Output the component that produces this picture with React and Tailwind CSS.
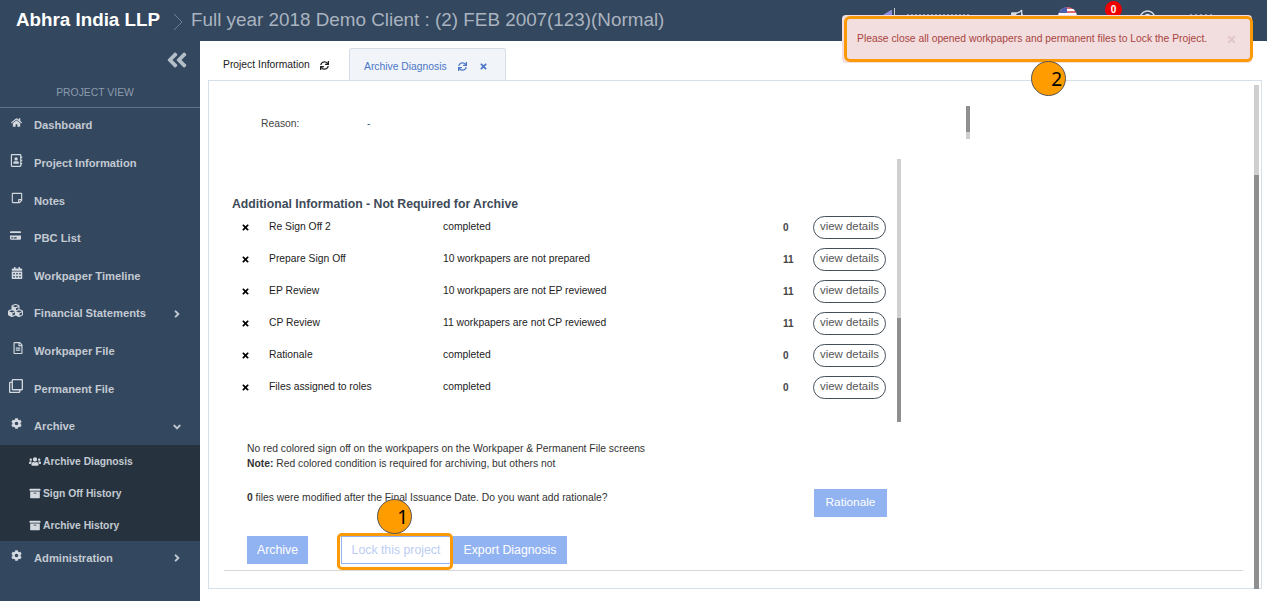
import React from 'react';
import {
  FaHome, FaRegAddressBook, FaRegStickyNote, FaCreditCard, FaCalendarAlt, FaCubes, FaRegFileAlt,
  FaRegClone, FaCog, FaAngleRight, FaAngleDown, FaAngleDoubleLeft, FaUsers, FaArchive, FaSync,
  FaTimes, FaBullhorn, FaRegQuestionCircle,
} from 'react-icons/fa';

const menuTop = [
  { label: 'Dashboard', icon: FaHome, iconClass: 'ml-[1px] text-[11px]' },
  { label: 'Project Information', icon: FaRegAddressBook, iconClass: 'text-[13px]' },
  { label: 'Notes', icon: FaRegStickyNote, iconClass: 'ml-[1px] text-[12px]' },
  { label: 'PBC List', icon: FaCreditCard, iconClass: 'text-[11px]' },
  { label: 'Workpaper Timeline', icon: FaCalendarAlt, iconClass: 'ml-[1px] text-[12px]' },
  { label: 'Financial Statements', icon: FaCubes, iconClass: '-ml-[2px] text-[15px]', arrow: 'right' },
  { label: 'Workpaper File', icon: FaRegFileAlt, iconClass: 'ml-[2px] text-[12px]' },
  { label: 'Permanent File', icon: FaRegClone, iconClass: '-ml-[1px] text-[14px]' },
  { label: 'Archive', icon: FaCog, iconClass: 'ml-[1px] text-[11px]', arrow: 'down' },
];

const subMenu = [
  { label: 'Archive Diagnosis', icon: FaUsers },
  { label: 'Sign Off History', icon: FaArchive },
  { label: 'Archive History', icon: FaArchive },
];

const rows = [
  ['Re Sign Off 2', 'completed', '0'],
  ['Prepare Sign Off', '10 workpapers are not prepared', '11'],
  ['EP Review', '10 workpapers are not EP reviewed', '11'],
  ['CP Review', '11 workpapers are not CP reviewed', '11'],
  ['Rationale', 'completed', '0'],
  ['Files assigned to roles', 'completed', '0'],
];

function MenuItem({ label, icon: Icon, iconClass, arrow, short }) {
  return (
    <div className={`flex items-center pl-[10px] pr-[17px] text-[11.2px] font-bold text-[#c3cad2] ${short ? 'h-[34px]' : 'h-[37.6px]'}`}>
      <span className="flex w-[24px] -translate-y-[3px]">
        <Icon className={`text-[#d4d9df] ${iconClass}`} />
      </span>
      <span className="flex-1">{label}</span>
      {arrow === 'right' && <FaAngleRight className="text-[12px]" />}
      {arrow === 'down' && <FaAngleDown className="text-[12px]" />}
    </div>
  );
}

function Sidebar() {
  return (
    <aside className="w-[200px] shrink-0 bg-[#33475f]">
      <div className="flex h-[38px] items-center justify-end pr-[11px]">
        <FaAngleDoubleLeft className="text-[24px] text-[#b4bec9]" />
      </div>
      <div className="-mb-px h-[29px] border-b border-[#5f7289] pr-[10px] pt-[6px] text-center text-[10.4px] text-[#8b9bae]">
        PROJECT VIEW
      </div>
      {menuTop.map((item) => (
        <MenuItem key={item.label} {...item} />
      ))}
      <div className="bg-[#26333f]">
        {subMenu.map(({ label, icon: Icon }) => (
          <div key={label} className="flex h-[32px] items-center gap-[2px] pl-[29px] text-[10.3px] font-bold text-[#c3cad2]">
            <Icon className="w-[12px] text-[11px] text-[#d4d9df]" />
            <span>{label}</span>
          </div>
        ))}
      </div>
      <MenuItem label="Administration" icon={FaCog} iconClass="ml-[1px] text-[11px]" arrow="right" short />
    </aside>
  );
}

function Header() {
  return (
    <header className="flex h-[41px] shrink-0 items-center bg-[#33475f] pl-[16px]">
      <span className="text-[18.8px] font-bold text-white">Abhra India LLP</span>
      <svg width="10" height="18" viewBox="0 0 10 18" className="ml-[13px] mt-[2px]" fill="none" stroke="#6d7f93">
        <path d="M1 1l8 8-8 8" />
      </svg>
      <span className="ml-[8px] text-[18.85px] text-[#aab4bf]">Full year 2018 Demo Client : (2) FEB 2007(123)(Normal)</span>
    </header>
  );
}

function DetailRow({ name, text, count }) {
  return (
    <div className="flex h-[32px] items-center text-[10.33px] text-[#222]">
      <FaTimes className="ml-[9px] w-[28px] pr-[19px] text-[9px] text-black" />
      <span className="w-[174px]">{name}</span>
      <span className="w-[340px]">{text}</span>
      <span className="w-[30px] text-[10px] font-bold text-[#444]">{count}</span>
      <button className="h-[23px] w-[73px] rounded-full border border-[#44505c] bg-white text-[11.4px] text-[#555]">
        view details
      </button>
    </div>
  );
}

function Panel() {
  return (
    <div className="relative h-[509px] w-[1054px] border border-[#d5e0ea] bg-white">
      {/* scrollbars */}
      <div className="absolute left-[1045px] top-[4px] h-[504px] w-[5px] bg-[#cfcfcf]">
        <div className="mt-[90px] h-[414px] bg-[#8f8f8f]" />
      </div>
      <div className="absolute left-[757px] top-[25px] h-[33px] w-[4px] bg-[#cfcfcf]">
        <div className="h-[26px] bg-[#8f8f8f]" />
      </div>
      <div className="absolute left-[688px] top-[78px] h-[263px] w-[4px] bg-[#cfcfcf]">
        <div className="mt-[159px] h-[104px] bg-[#8f8f8f]" />
      </div>

      <div className="flex h-[85px] items-end pb-[35px] pl-[52px] text-[10.33px] text-[#444]">
        <span className="w-[106px]">Reason:</span>
        <span className="text-[#2a6496]">-</span>
      </div>
      <div className="pl-[23px] pt-[30px]">
        <h3 className="h-[15px] text-[12.25px] font-bold leading-[16px] text-[#3d4a58]">
          Additional Information - Not Required for Archive
        </h3>
        <div className="w-[655px]">
          {rows.map(([name, text, count]) => (
            <DetailRow key={name} name={name} text={text} count={count} />
          ))}
        </div>
      </div>
      <div className="pl-[38px] pt-[38px] text-[10.33px] leading-[15px] text-[#333]">
        <p>No red colored sign off on the workpapers on the Workpaper &amp; Permanent File screens</p>
        <p><b>Note:</b> Red colored condition is required for archiving, but others not</p>
      </div>
      <div className="flex w-[678px] items-start justify-between pl-[38px] pt-[15px]">
        <p className="pt-[4px] text-[10.33px] text-[#333]"><b>0</b> files were modified after the Final Issuance Date. Do you want add rationale?</p>
        <button className="mt-[3px] h-[28px] w-[73px] bg-[#92b3f2] text-[11.8px] text-white">Rationale</button>
      </div>
      <div className="mx-[15px] mt-[19px] flex h-[35px] w-[1019px] items-start border-b border-[#d6d6d6] pl-[23px]">
        <button className="h-[28px] w-[61px] bg-[#92b3f2] text-[12.3px] text-white">Archive</button>
        <button className="ml-[33px] h-[28px] w-[110px] border border-[#92b3f2] bg-white text-[12.3px] text-[#bccdf5]">Lock this project</button>
        <button className="ml-[2px] h-[28px] w-[114px] bg-[#92b3f2] text-[12.3px] text-white">Export Diagnosis</button>
      </div>
    </div>
  );
}

function Main() {
  return (
    <main className="flex-1 bg-white pl-[8px]">
      <div className="flex h-[39px] items-end">
        <div className="flex h-[33px] w-[141px] items-center pl-[15px] pt-[3px] text-[10.33px] text-[#222]">
          <span>Project Information</span>
          <FaSync className="ml-[10px] text-[9px] text-[#222]" />
        </div>
        <div className="relative top-[1px] flex h-[33px] w-[157px] items-center rounded-t-[3px] border border-b-0 border-[#d5dde6] bg-[#f1f4f8] pl-[14px] pt-[3px] text-[10.33px] text-[#4a76c8]">
          <span>Archive Diagnosis</span>
          <FaSync className="ml-[11px] text-[9px]" />
          <FaTimes className="ml-[12px] text-[9px]" />
        </div>
      </div>
      <Panel />
    </main>
  );
}

function TopRight() {
  return (
    <>
      <svg className="absolute left-[878px] top-[8px]" width="20" height="10" viewBox="0 0 20 10">
        <path d="M0 10L13 2h1v8z" fill="#8f8fe0" />
        <rect x="16" y="0" width="1" height="10" fill="#c9d0d8" />
      </svg>
      <div className="absolute left-[907px] top-[14px] h-px w-[63px] bg-[repeating-linear-gradient(90deg,#8a97a6_0,#8a97a6_2px,transparent_2px,transparent_4px)]" />
      <FaBullhorn className="absolute left-[1011px] top-[9px] text-[12px] text-[#d5dbe1]" />
      <div className="absolute left-[1058px] top-[7px] h-[12px] w-[19px] overflow-hidden rounded-t-full bg-[repeating-linear-gradient(180deg,#e06b75_0,#e06b75_2px,#ffffff_2px,#ffffff_4px)]">
        <div className="h-[6px] w-[9px] bg-[#4a5fb0]" />
      </div>
      <div className="absolute left-[1105px] top-[1px] flex h-[17px] w-[17px] items-center justify-center rounded-full bg-[#f00000] text-[10px] font-bold text-white">
        0
      </div>
      <FaRegQuestionCircle className="absolute left-[1139px] top-[10px] text-[17px] text-[#d5dbe1]" />
      <div className="absolute left-[1190px] top-[14px] h-px w-[25px] bg-[repeating-linear-gradient(90deg,#8a97a6_0,#8a97a6_2px,transparent_2px,transparent_5px)]" />
    </>
  );
}

export default function App() {
  return (
    <div className="relative flex h-[601px] w-[1267px] flex-col overflow-hidden bg-white font-['Liberation_Sans',Arial,sans-serif]">
      <Header />
      <div className="flex flex-1">
        <Sidebar />
        <Main />
      </div>
      <TopRight />

      {/* error toast */}
      <div className="absolute left-[842px] top-[15px] flex h-[48px] w-[410px] items-center justify-between rounded-[4px] bg-[#f2dede] pl-[15px] pr-[15px] text-[10.33px] text-[#a94442]">
        <span>Please close all opened workpapers and permanent files to Lock the Project.</span>
        <FaTimes className="text-[11px] text-[#e2c6c8]" />
      </div>

      {/* callouts */}
      <div className="absolute left-[844px] top-[16px] h-[46px] w-[409px] rounded-[6px] border-[3px] border-[#fb9a06]" />
      <div className="absolute left-[337px] top-[533px] h-[37px] w-[116px] rounded-[5px] border-[3px] border-[#fb9a06]" />
      <div className="absolute left-[377px] top-[499px] flex h-[35px] w-[35px] items-center justify-end rounded-full border border-[#555] bg-[#ff9c00] pr-[3px] pt-[2px] font-['Noto_Sans',sans-serif] text-[19px] text-black">1</div>
      <div className="absolute left-[1031px] top-[61px] flex h-[35px] w-[35px] items-center justify-end rounded-full border border-[#555] bg-[#ff9c00] pr-[3px] pt-[2px] font-['Noto_Sans',sans-serif] text-[19px] text-black">2</div>
    </div>
  );
}
